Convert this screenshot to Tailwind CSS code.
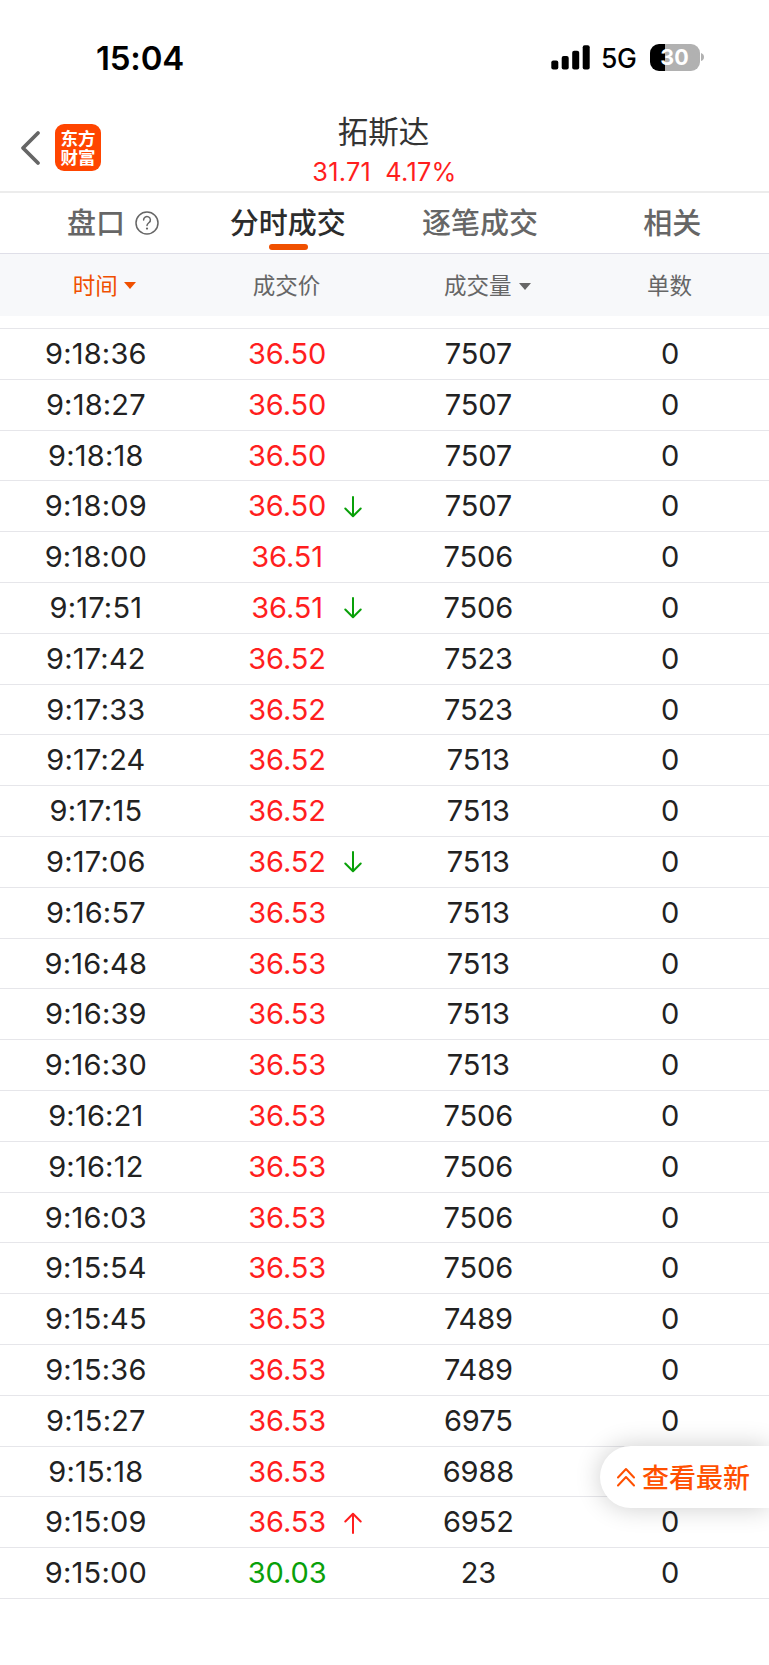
<!DOCTYPE html>
<html lang="zh-CN">
<head>
<meta charset="utf-8">
<title>拓斯达 分时成交</title>
<script src="https://cdn.jsdelivr.net/npm/@tailwindcss/browser@4"></script>
</head>
<body class="bg-white">
<div class="relative flex h-[1665px] w-[769px] flex-col overflow-hidden bg-white font-[Inter,'Noto_Sans_CJK_SC',sans-serif] text-[#222]">
  <div class="flex h-[100px] shrink-0 items-start justify-between pr-[65px] pl-[96px] text-black">
    <div class="mt-[36px] text-[33px] leading-[44px] font-semibold tracking-[-0.2px]">15:04</div>
    <div class="mt-[43px] flex h-[28px] items-center">
      <svg class="h-[25px] w-[39px]" viewBox="0 0 39 25"><rect x="0.3" y="15.5" width="7" height="9" rx="2"/><rect x="10.7" y="11" width="7" height="13.5" rx="2"/><rect x="21.2" y="5.7" width="7" height="18.8" rx="2"/><rect x="31.7" y="0.3" width="7" height="24.2" rx="2"/></svg>
      <div class="mt-[2px] ml-[11px] w-[37px] text-[26.5px] leading-[28px] font-medium tracking-[-0.3px] whitespace-nowrap">5G</div>
      <div class="ml-[12px] flex h-[27px] w-[50px] items-center justify-center rounded-[9px] bg-linear-to-r from-black from-[31%] to-[#b1b1b1] to-[31%] text-[21.5px] leading-none font-bold text-white"><span class="mt-[2px] mr-[1px]">30</span></div>
      <svg class="ml-[1px] h-[8px] w-[3px]" viewBox="0 0 3 8"><path d="M0 0Q3 1 3 4T0 8Z" fill="#b1b1b1"/></svg>
    </div>
  </div>

  <header class="grid h-[93px] shrink-0 grid-cols-[1fr_200px_1fr] border-b-2 border-[#ececec]">
    <div class="flex items-start pt-[24px] pl-[20px]">
      <svg class="mt-[6px] h-[36px] w-[22px]" viewBox="0 0 22 36" fill="none" stroke="#666" stroke-width="3.8" stroke-linecap="round" stroke-linejoin="round"><path d="M18 3L3 18L18 33"/></svg>
      <div class="ml-[13px] flex h-[47px] w-[46px] flex-col items-center justify-center rounded-[9px] bg-[#ff4500] text-[17.5px] leading-[19px] font-bold text-white"><span>东方</span><span>财富</span></div>
    </div>
    <div class="flex flex-col items-center">
      <div class="mt-[14px] mr-[2px] text-[30.5px] leading-[36px] text-[#333]">拓斯达</div>
      <div class="mt-[7px] flex gap-[14px] text-[25.3px] leading-[30px] tracking-[0.3px] whitespace-nowrap text-[#ff1e1e]"><span>31.71</span><span>4.17%</span></div>
    </div>
  </header>

  <nav class="grid h-[61px] shrink-0 grid-cols-4 border-b border-[#dfdfe8] text-[29px] leading-[62px] font-medium text-[#666]">
    <div class="flex items-center pl-[67px]"><span>盘口</span>
      <svg class="-mt-[2px] ml-[10px] h-[24px] w-[24px]" viewBox="0 0 24 24" fill="none" stroke="#666" stroke-width="1.5"><circle cx="12" cy="12" r="11"/><path d="M8.6 9a3.4 3.3 0 1 1 5.5 2.5C12.7 12.6 12 13 12 14.6" stroke-linecap="round"/><circle cx="12" cy="17.6" r="1.1" fill="#666" stroke="none"/></svg>
    </div>
    <div class="flex flex-col items-center text-[#2c2c2c]"><span class="mr-[1px] h-[51px]">分时成交</span><span class="h-[6px] w-[39px] rounded-full bg-[#f05000]"></span></div>
    <div class="pr-[1px] text-center">逐笔成交</div>
    <div class="pr-[1px] text-center">相关</div>
  </nav>

  <div class="h-[62px] shrink-0 bg-[#f7f8fa]">
    <div class="grid w-[767px] grid-cols-4 text-[22.5px] leading-[63px] text-[#666]">
      <div class="flex items-center justify-center gap-[6px] pl-[17px] text-[#f05000]"><span>时间</span><svg class="h-[7px] w-[12px]" viewBox="0 0 12 7"><path d="M0 0H12L6 7Z" fill="#f05000"/></svg></div>
      <div class="pr-[2px] text-center">成交价</div>
      <div class="flex items-center justify-center gap-[7px] pl-[16px]"><span>成交量</span><svg class="mt-[1px] h-[7px] w-[12px]" viewBox="0 0 12 7"><path d="M0 0H12L6 7Z" fill="#666"/></svg></div>
      <div class="pr-[3px] text-center">单数</div>
    </div>
  </div>
  <div class="h-[13px] shrink-0 border-b border-[#e6e6ea]"></div>
  <main id="rows" class="text-[29px]"></main>

  <button class="absolute top-[1446px] right-0 flex h-[62px] w-[169px] items-center rounded-l-full bg-white pl-[17px] text-[27px] font-medium text-[#ff5000] shadow-[0_0_26px_rgba(0,0,0,0.2)]">
    <svg class="-mt-[1px] h-[20px] w-[18px]" viewBox="0 0 18 20" fill="none" stroke="#ff5000" stroke-width="2" stroke-linecap="round" stroke-linejoin="round"><path d="M1 10.5L9 2L17 10.5M1 18.5L9 10L17 18.5"/></svg>
    <span class="mt-[4px] ml-[7px] whitespace-nowrap">查看最新</span>
  </button>
</div>
<script>
const data = `9:18:36 36.50 7507
9:18:27 36.50 7507
9:18:18 36.50 7507
9:18:09 36.50 7507 down
9:18:00 36.51 7506
9:17:51 36.51 7506 down
9:17:42 36.52 7523
9:17:33 36.52 7523
9:17:24 36.52 7513
9:17:15 36.52 7513
9:17:06 36.52 7513 down
9:16:57 36.53 7513
9:16:48 36.53 7513
9:16:39 36.53 7513
9:16:30 36.53 7513
9:16:21 36.53 7506
9:16:12 36.53 7506
9:16:03 36.53 7506
9:15:54 36.53 7506
9:15:45 36.53 7489
9:15:36 36.53 7489
9:15:27 36.53 6975
9:15:18 36.53 6988
9:15:09 36.53 6952 up
9:15:00 30.03 23`.split('\n').map(l => l.split(' '));
const arrows = {
  down: '<svg class="absolute top-[14.5px] left-[152.5px] h-[22px] w-[18px]" viewBox="0 0 18 22" fill="none" stroke="#09a009" stroke-width="2" stroke-linecap="round" stroke-linejoin="round"><path d="M9 1V20M1.3 12.5L9 20.2L16.7 12.5"/></svg>',
  up: '<svg class="absolute top-[14.5px] left-[152.5px] h-[22px] w-[18px]" viewBox="0 0 18 22" fill="none" stroke="#ff1e1e" stroke-width="2" stroke-linecap="round" stroke-linejoin="round"><path d="M9 21V2M1.3 9.5L9 1.8L16.7 9.5"/></svg>'
};
// The floating button covers the last cell of the 9:15:18 row.
document.getElementById('rows').innerHTML = data.map(([t, p, v, d]) =>
  `<div class="h-[50.8px] border-b border-[#e6e6ea]"><div class="grid w-[767px] grid-cols-4 text-center leading-[50.4px]"><div class="tracking-[0.2px]">${t}</div><div class="relative pr-[1px] tracking-[-0.1px] ${p === '30.03' ? 'text-[#09a009]' : 'text-[#ff1e1e]'}">${p}${arrows[d] || ''}</div><div class="pr-[2px] tracking-[-0.1px]">${v}</div><div class="pr-[2px]">${t === '9:15:18' ? '' : '0'}</div></div></div>`).join('');
</script>
</body>
</html>
